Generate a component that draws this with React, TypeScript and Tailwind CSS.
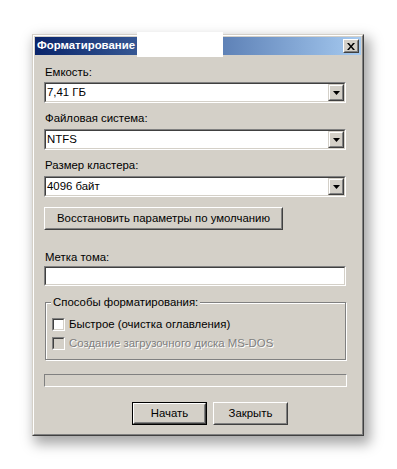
import React from "react";

const face = "bg-[#d4d0c8]";

function Raised({ children, className = "" }: { children?: React.ReactNode; className?: string }) {
  return (
    <div className={`border border-t-white border-l-white border-r-[#404040] border-b-[#404040] ${className}`}>
      <div className="w-full h-full border border-t-[#d4d0c8] border-l-[#d4d0c8] border-r-[#808080] border-b-[#808080] bg-[#d4d0c8] flex items-center justify-center">
        {children}
      </div>
    </div>
  );
}

function Sunken({ children, className = "", inner = "bg-white" }: { children?: React.ReactNode; className?: string; inner?: string }) {
  return (
    <div className={`border border-t-[#808080] border-l-[#808080] border-r-white border-b-white ${className}`}>
      <div className={`w-full h-full border border-t-[#404040] border-l-[#404040] border-r-[#d4d0c8] border-b-[#d4d0c8] ${inner} flex items-center`}>
        {children}
      </div>
    </div>
  );
}

function Combo({ value }: { value: string }) {
  return (
    <Sunken className="h-[21px] w-[302px]">
      <span className="flex-1 pl-[1px] leading-none">{value}</span>
      <div className="h-full w-[16px] border border-t-[#d4d0c8] border-l-[#d4d0c8] border-r-[#404040] border-b-[#404040]">
        <div className="w-full h-full border border-t-white border-l-white border-r-[#808080] border-b-[#808080] bg-[#d4d0c8] flex items-center justify-center">
          <svg width="7" height="4" viewBox="0 0 7 4">
            <path d="M0 0H7L3.5 4Z" fill="#000" />
          </svg>
        </div>
      </div>
    </Sunken>
  );
}

function Label({ text, className = "" }: { text: string; className?: string }) {
  return <div className={`h-[13px] leading-[13px] pl-[1px] ${className}`}>{text}</div>;
}

function CheckBox({ disabled = false }: { disabled?: boolean }) {
  return <Sunken className="w-[13px] h-[13px] shrink-0" inner={disabled ? "bg-[#d4d0c8]" : "bg-white"} />;
}

export default function App() {
  return (
    <div
      className="relative w-[397px] h-[469px] bg-white pt-[34px] pl-[32px] text-[11.4px] text-black"
      style={{ fontFamily: "'Liberation Sans', Arial, sans-serif" }}
    >
      <div className="w-[332px] h-[402px] border border-t-[#d4d0c8] border-l-[#d4d0c8] border-r-[#404040] border-b-[#404040] shadow-[4px_6px_12px_2px_rgba(0,0,0,0.35)]">
        <div className={`w-full h-full border border-t-white border-l-white border-r-[#808080] border-b-[#808080] ${face} p-[1px] flex flex-col`}>
          {/* caption */}
          <div className="h-[18px] flex items-center justify-between bg-gradient-to-r from-[#0a246a] to-[#a6caf0] pl-[2px] pr-[2px]">
            <span className="text-white font-bold leading-none">Форматирование</span>
            <Raised className="w-[16px] h-[14px]">
              <svg width="8" height="7" viewBox="0 0 8 7">
                <path d="M0 0h2l2 2.5L6 0h2L5 3.5 8 7H6L4 4.5 2 7H0l3-3.5Z" fill="#000" />
              </svg>
            </Raised>
          </div>

          {/* client */}
          <div className="flex flex-col pl-[9px] pt-[11px]">
            <Label text="Емкость:" className="pl-[1px]" />
            <div className="mt-[3px]">
              <Combo value="7,41 ГБ" />
            </div>
            <Label text="Файловая система:" className="mt-[9px]" />
            <div className="mt-[4px]">
              <Combo value="NTFS" />
            </div>
            <Label text="Размер кластера:" className="mt-[9px]" />
            <div className="mt-[4px]">
              <Combo value="4096 байт" />
            </div>
            <Raised className="mt-[10px] w-[239px] h-[23px]">
              <span className="leading-none">Восстановить параметры по умолчанию</span>
            </Raised>
            <Label text="Метка тома:" className="mt-[21px]" />
            <Sunken className="mt-[2px] w-[302px] h-[20px]" />

            {/* group box */}
            <div className="relative mt-[16px] ml-[1px] w-[301px] h-[58px] border border-[#808080] shadow-[inset_1px_1px_0_#fff,1px_1px_0_#fff]">
              <span className={`absolute left-[5px] top-[-7px] px-[2px] h-[13px] leading-[13px] ${face}`}>
                Способы форматирования:
              </span>
              <div className="flex flex-col pl-[6px] pt-[15px] gap-[6px]">
                <div className="flex items-center gap-[4px] h-[13px]">
                  <CheckBox />
                  <span className="leading-none">Быстрое (очистка оглавления)</span>
                </div>
                <div className="flex items-center gap-[4px] h-[13px]">
                  <CheckBox disabled />
                  <span className="leading-none text-[#808080] [text-shadow:1px_1px_0_#fff]">
                    Создание загрузочного диска MS-DOS
                  </span>
                </div>
              </div>
            </div>

            {/* progress */}
            <div className="mt-[14px] w-[303px] h-[13px] border border-t-[#808080] border-l-[#808080] border-r-white border-b-white" />

            {/* buttons */}
            <div className="mt-[15px] flex gap-[6px] pl-[88px]">
              <div className="border border-black w-[75px] h-[23px]">
                <Raised className="w-full h-full">
                  <span className="leading-none">Начать</span>
                </Raised>
              </div>
              <Raised className="w-[75px] h-[23px]">
                <span className="leading-none">Закрыть</span>
              </Raised>
            </div>
          </div>
        </div>
      </div>

      {/* redaction block over the title bar */}
      <div className="absolute left-[137px] top-[32px] w-[86px] h-[25px] bg-white" />
    </div>
  );
}
